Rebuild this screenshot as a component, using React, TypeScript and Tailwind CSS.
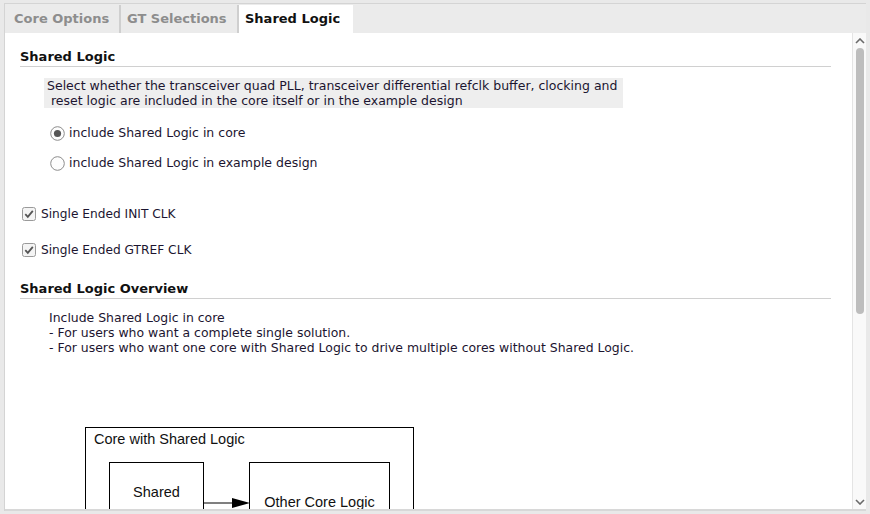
import React from "react";

const font = { fontFamily: '"DejaVu Sans", "Liberation Sans", sans-serif' };

function Radio({ checked }: { checked: boolean }) {
  return (
    <svg width="15" height="15" viewBox="0 0 15 15" className="shrink-0">
      <circle cx="7.5" cy="7.5" r="6.8" fill="#fdfdfd" stroke="#8c8c8c" strokeWidth="1" />
      {checked && <circle cx="7.5" cy="7.5" r="3.6" fill="#555" />}
    </svg>
  );
}

function Check() {
  return (
    <svg width="14" height="14" viewBox="0 0 14 14" className="shrink-0">
      <rect x="0.5" y="0.5" width="13" height="13" rx="2" fill="#f4f4f4" stroke="#9a9a9a" />
      <path d="M3.3 7.2 L5.8 9.8 L10.8 3.8" fill="none" stroke="#555" strokeWidth="1.8" />
    </svg>
  );
}

export default function App() {
  return (
    <div className="w-[870px] h-[514px] bg-[#e9e9e9] pt-[3px] pl-[4px] pr-[4px] pb-[3px] overflow-hidden" style={font}>
      <div className="h-full flex flex-col border-t border-l border-[#d4d4d4]">
        {/* tab bar */}
        <div className="h-[29px] flex items-end bg-[#ebebeb] pl-[1px] shrink-0">
          <div className="h-[28px] w-[115px] flex items-center pl-[8px] text-[13px] font-bold text-[#8d8d8d] border-r-2 border-[#cfcfcf]">
            Core Options
          </div>
          <div className="h-[28px] w-[118px] flex items-center pl-[6px] text-[13px] font-bold text-[#8d8d8d] border-r-2 border-[#cfcfcf]">
            GT Selections
          </div>
          <div className="h-[28px] w-[114px] flex items-center pl-[6px] text-[13px] font-bold text-[#111] bg-white">
            Shared Logic
          </div>
        </div>
        {/* content */}
        <div className="flex-1 flex bg-white overflow-hidden border-b-2 border-[#d8d8d8]">
          <div className="flex-1 pl-[15px] pr-[21px] pt-[16px] overflow-hidden">
            <div className="text-[13px] font-bold text-[#111] leading-[16px]">Shared Logic</div>
            <div className="h-px bg-[#d0d0d0] mt-[1px]" />
            <div className="ml-[24px] mt-[11px] w-[579px] bg-[#eeeeee] text-[12.5px] leading-[15px] text-[#1c1530] px-[3px] py-[0px] whitespace-nowrap">
              Select whether the transceiver quad PLL, transceiver differential refclk buffer, clocking and
              <br />
              &nbsp;reset logic are included in the core itself or in the example design
            </div>
            <div className="ml-[30px] mt-[17px] flex items-center gap-[4px] text-[12.5px] text-[#1c1530] h-[16px]">
              <Radio checked /> include Shared Logic in core
            </div>
            <div className="ml-[30px] mt-[14px] flex items-center gap-[4px] text-[12.5px] text-[#1c1530] h-[16px]">
              <Radio checked={false} /> include Shared Logic in example design
            </div>
            <div className="ml-[2px] mt-[35px] flex items-center gap-[5px] text-[12.2px] text-[#1c1530] h-[16px]">
              <Check /> Single Ended INIT CLK
            </div>
            <div className="ml-[2px] mt-[20px] flex items-center gap-[5px] text-[12.2px] text-[#1c1530] h-[16px]">
              <Check /> Single Ended GTREF CLK
            </div>
            <div className="mt-[23px] text-[13px] font-bold text-[#111] leading-[16px]">Shared Logic Overview</div>
            <div className="h-px bg-[#d0d0d0] mt-[1px]" />
            <div className="ml-[29px] mt-[11px] text-[12.45px] leading-[15px] text-[#1c1530] whitespace-nowrap">
              <div>Include Shared Logic in core</div>
              <div>- For users who want a complete single solution.</div>
              <div>- For users who want one core with Shared Logic to drive multiple cores without Shared Logic.</div>
            </div>
            {/* diagram */}
            <div className="relative ml-[65px] mt-[72px] w-[329px] h-[120px] border border-black">
              <div className="absolute left-[8px] top-[2px] text-[14.5px] text-[#111] leading-[18px] whitespace-nowrap" style={{ fontFamily: '"Liberation Sans", sans-serif' }}>
                Core with Shared Logic
              </div>
              <div className="absolute left-[23px] top-[34px] w-[95px] h-[90px] border border-black flex justify-center pt-[20px] text-[14.5px] text-[#111] leading-[18px]" style={{ fontFamily: '"Liberation Sans", sans-serif' }}>
                Shared
              </div>
              <div className="absolute left-[163px] top-[34px] w-[141px] h-[90px] border border-black flex justify-center pt-[30px] text-[14.5px] text-[#111] leading-[18px] whitespace-nowrap" style={{ fontFamily: '"Liberation Sans", sans-serif' }}>
                Other Core Logic
              </div>
              <svg className="absolute left-[117px] top-[69px]" width="48" height="12" viewBox="0 0 48 12">
                <line x1="0" y1="6" x2="32" y2="6" stroke="black" strokeWidth="1" />
                <polygon points="29,1 47,6 29,11" fill="black" />
              </svg>
            </div>
          </div>
          {/* scrollbar */}
          <div className="w-[14px] shrink-0 bg-[#f9f9f9] border-l border-[#e4e4e4] flex flex-col items-center">
            <svg width="10" height="6" viewBox="0 0 10 6" className="mt-[5px]">
              <path d="M1 5 L5 1 L9 5" fill="none" stroke="#6a6a6a" strokeWidth="1.6" />
            </svg>
            <div className="mt-[4px] w-[8px] h-[266px] rounded-full bg-[#bdbdbd]" />
            <div className="flex-1" />
            <svg width="10" height="6" viewBox="0 0 10 6" className="mb-[4px]">
              <path d="M1 1 L5 5 L9 1" fill="none" stroke="#6a6a6a" strokeWidth="1.6" />
            </svg>
          </div>
        </div>
      </div>
    </div>
  );
}
